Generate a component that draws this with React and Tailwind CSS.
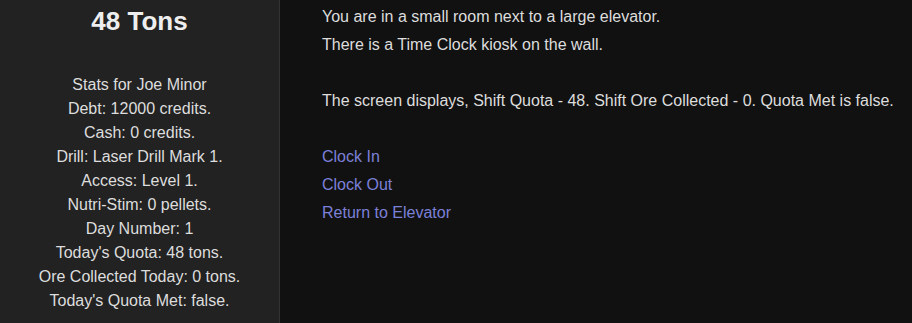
import React from 'react';

const stats = [
    "Stats for Joe Minor",
    "Debt: 12000 credits.",
    "Cash: 0 credits.",
    "Drill: Laser Drill Mark 1.",
    "Access: Level 1.",
    "Nutri-Stim: 0 pellets.",
    "Day Number: 1",
    "Today's Quota: 48 tons.",
    "Ore Collected Today: 0 tons.",
    "Today's Quota Met: false.",
];

const links = ["Clock In", "Clock Out", "Return to Elevator"];

const App = () => {
    return (
        <div className="flex h-[323px] w-full bg-[#111111] text-[#dddddd] text-[16px] font-['Liberation_Sans',Arial,sans-serif] overflow-hidden">
            {/* Sidebar */}
            <aside className="w-[280px] shrink-0 bg-[#222222] border-r border-[#333333] text-center">
                <h1 className="pt-[6px] text-[26px] leading-[30px] font-bold text-[#eeeeee]">48 Tons</h1>
                <div className="mt-[37px] leading-[24px]">
                    {stats.map((s) => (
                        <div key={s}>{s}</div>
                    ))}
                </div>
            </aside>

            {/* Main */}
            <main className="flex-1 pl-[42px] pt-[3px] leading-[28px]">
                <p>You are in a small room next to a large elevator.</p>
                <p>There is a Time Clock kiosk on the wall.</p>
                <p className="mt-[28px]">The screen displays, Shift Quota - 48. Shift Ore Collected - 0. Quota Met is false.</p>
                <div className="mt-[28px]">
                    {links.map((l) => (
                        <div key={l}>
                            <a href="#" className="text-[#7b80d8]">{l}</a>
                        </div>
                    ))}
                </div>
            </main>
        </div>
    );
};

export default App;
